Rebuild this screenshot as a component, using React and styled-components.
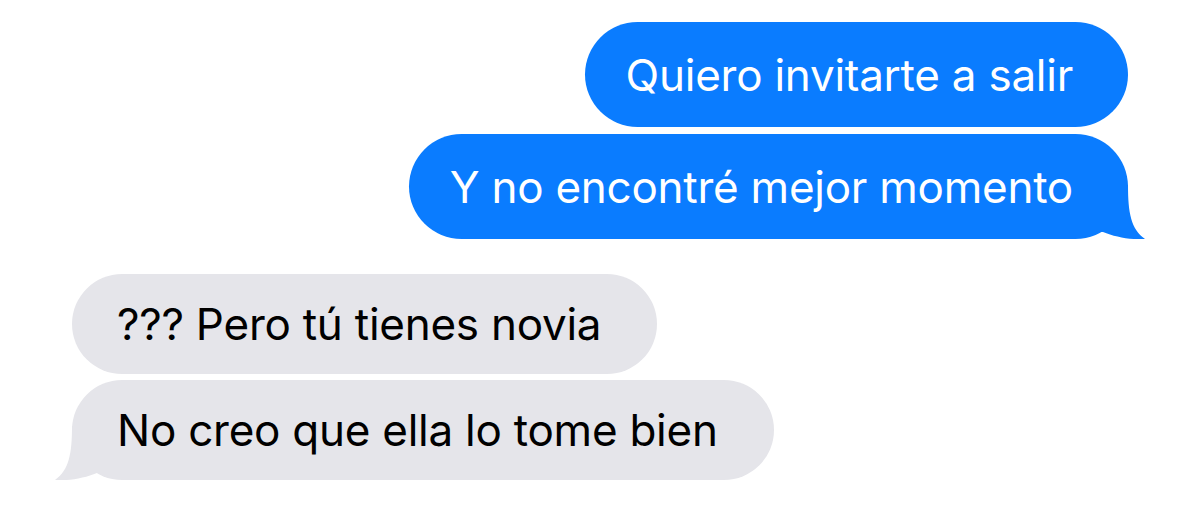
import React from 'react';
import styled, { createGlobalStyle } from 'styled-components';

const GlobalStyle = createGlobalStyle`
    html, body {
        margin: 0;
        padding: 0;
        background: #ffffff;
    }
    body {
        font-family: Inter, "Liberation Sans", Arial, sans-serif;
        -webkit-font-smoothing: antialiased;
    }
`;

const Thread = styled.div`
    box-sizing: border-box;
    display: flex;
    flex-direction: column;
    gap: 35px;
    padding: 22px 72px 0;
    width: 1200px;
    height: 510px;
`;

const Group = styled.div`
    align-items: ${(p) => (p.$sent ? 'flex-end' : 'flex-start')};
    display: flex;
    flex-direction: column;
    gap: ${(p) => (p.$sent ? 7 : 6)}px;
`;

const Bubble = styled.div`
    align-items: center;
    background: ${(p) => (p.$sent ? '#0a7cff' : '#e5e5ea')};
    border-radius: 56px;
    box-sizing: border-box;
    color: ${(p) => (p.$sent ? '#ffffff' : '#000000')};
    display: flex;
    font-size: 44px;
    height: ${(p) => (p.$sent ? 105 : 100)}px;
    letter-spacing: -0.25px;
    padding: ${(p) => (p.$sent ? '0 55px 0 41px' : '0 56px 0 45px')};
    position: relative;
    white-space: nowrap;
`;

// the little hook under the last bubble of a group; mirrored for received ones
const Tail = styled.svg`
    bottom: 0;
    position: absolute;
    ${(p) => (p.$sent ? 'right: -17px;' : 'left: -17px; transform: scaleX(-1);')}
`;

const BubbleTail = ({ sent }) => (
    <Tail $sent={sent} width="44" height="64" viewBox="0 0 44 64">
        <path
            d="M0 10 L27 10 C27 38 30 54 44 64 C30 65 14 62 2 57 L0 57 Z"
            fill={sent ? '#0a7cff' : '#e5e5ea'}
        />
    </Tail>
);

const messages = [
    { sent: true, lines: ['Quiero invitarte a salir', 'Y no encontré mejor momento'] },
    { sent: false, lines: ['??? Pero tú tienes novia', 'No creo que ella lo tome bien'] },
];

export default function App() {
    return (
        <>
            <GlobalStyle />
            <Thread>
                {messages.map((group, i) => (
                    <Group key={i} $sent={group.sent}>
                        {group.lines.map((text, j) => (
                            <Bubble key={j} $sent={group.sent}>
                                {text}
                                {j === group.lines.length - 1 && <BubbleTail sent={group.sent} />}
                            </Bubble>
                        ))}
                    </Group>
                ))}
            </Thread>
        </>
    );
}
